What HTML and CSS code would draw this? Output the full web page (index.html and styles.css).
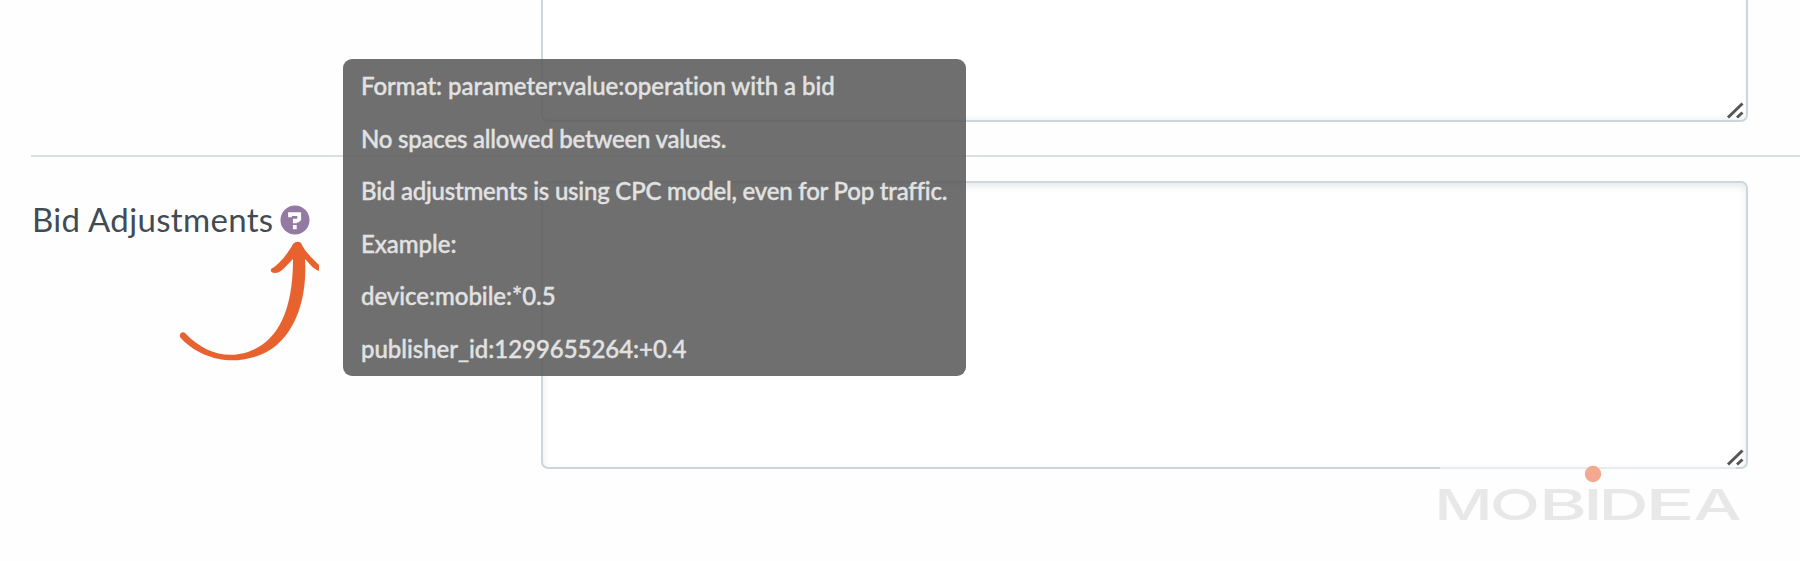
FILE: index.html
```
<!doctype html>
<html lang="en">
<head>
<meta charset="utf-8">
<meta name="viewport" content="width=device-width, initial-scale=1">
<title>Bid Adjustments</title>
<link rel="stylesheet" href="styles.css">
</head>
<body>
<main class="form">
<div class="row row-first">
<div class="label"></div>
<div class="field">
<svg class="grip" viewBox="0 0 18 18"><path d="M2 16.5 16.5 2.5M11 16.5l5.5-5"/></svg>
</div>
</div>

<div class="row">
<div class="label">
<span class="label-text">Bid Adjustments</span>
<span class="help">
<svg class="help-icon" viewBox="0 0 30 30"><circle cx="15" cy="15" r="14.5"/><path d="M10 12.3V9.2h9.2v5l-1.5 1.4h-2.9v2.6M14.8 20v4.2"/></svg>
<svg class="arrow" viewBox="0 0 142 122"><path d="M1 97C0 94 3 91 6 93C25 113 47 119 69 112C95 103 114 77 114 19C106 27 102 33 96 33Q91 33 92 29C101 24 109 13 114 4Q118 0 122 3C126 12 134 19 140 25V31C134 29 130 23 126 19C129 66 111 110 71 118C47 125 17 116 1 97Z"/></svg>
<div class="tooltip">
<p>Format: parameter:value:operation with a bid</p>
<p class="tight">No spaces allowed between values.</p>
<p class="tight">Bid adjustments is using CPC model, even for Pop traffic.</p>
<p>Example:</p>
<p>device:mobile:*0.5</p>
<p>publisher_id:1299655264:+0.4</p>
</div>
</span>
</div>
<div class="field">
<svg class="grip" viewBox="0 0 18 18"><path d="M2 16.5 16.5 2.5M11 16.5l5.5-5"/></svg>
</div>
</div>
</main>

<svg class="brand" viewBox="0 0 320 80" role="img" aria-label="Mobidea">
<path class="brand-fade" d="M12 3.5H308"/>
<circle cx="165" cy="10" r="8.2"/>
<text x="6.5" y="56" textLength="58" lengthAdjust="spacingAndGlyphs">M</text>
<text x="62" y="56" textLength="50" lengthAdjust="spacingAndGlyphs">O</text>
<text x="111" y="56" textLength="48" lengthAdjust="spacingAndGlyphs">B</text>
<text x="155" y="56" textLength="20" lengthAdjust="spacingAndGlyphs">I</text>
<text x="170.5" y="56" textLength="50" lengthAdjust="spacingAndGlyphs">D</text>
<text x="217" y="56" textLength="50" lengthAdjust="spacingAndGlyphs">E</text>
<text x="265.5" y="56" textLength="48" lengthAdjust="spacingAndGlyphs">A</text>
</svg>
</body>
</html>
```

FILE: styles.css
```
* { box-sizing: border-box; }
html, body { margin: 0; padding: 0; height: 561px; overflow: hidden; background: #fefefe; font-family: Lato, "Open Sans", sans-serif; color: #414b55; }
p { margin: 0; }
.form { padding-left: 31px; }
.row { display: grid; grid-template-columns: 510px 1207px; padding-top: 24px; }
.row-first { height: 157px; padding: 0 0 34px; border-bottom: 2px solid #dce0e1; }
.field { position: relative; height: 288px; border: 2px solid #cbd7db; border-radius: 7px; background: #fff; box-shadow: inset 0 3px 7px rgba(70,110,125,0.15); }
.row-first .field { height: 122px; border-top: 0; border-radius: 0 0 7px 7px; box-shadow: inset -1px -3px 5px -2px rgba(70,110,125,0.12); }
.grip { position: absolute; right: 2px; bottom: 1px; width: 18px; height: 18px; fill: none; stroke: #555; stroke-width: 3; }

.label { display: flex; align-items: flex-start; padding: 19px 0 0 1px; font-size: 33px; line-height: 40px; }
.label-text { width: 248px; margin-top: -1px; letter-spacing: 0.33px; white-space: nowrap; }
.help { position: relative; width: 30px; height: 30px; margin-top: 5px; }
.help-icon { display: block; width: 30px; height: 30px; fill: #927aa2; }
.help-icon path { fill: none; stroke: #fff; stroke-width: 3.8; }
.arrow { position: absolute; left: -101px; top: 35px; width: 142px; height: 122px; fill: #e7622f; }

.tooltip { position: absolute; z-index: 1; left: 63px; top: -146px; width: 623px; height: 317px; padding: 11px 18px 10px; border-radius: 9px; background: rgba(91,91,91,0.88); color: #e2e2e2; font-size: 24px; font-weight: 500; line-height: 32px; letter-spacing: -0.04px; white-space: nowrap; font-variant-ligatures: none; -webkit-text-stroke: 0.4px #e2e2e2; }
.tooltip p { margin-bottom: 20.5px; }
.tooltip .tight { letter-spacing: -0.21px; }

.brand { position: absolute; left: 1428px; top: 464px; width: 320px; height: 80px; overflow: visible; font-family: Inter, sans-serif; font-size: 43px; font-weight: 500; fill: #e9e8e8; }
.brand circle { fill: #f4a890; }
.brand-fade { stroke: #fff; stroke-opacity: 0.55; stroke-width: 3; }
```
